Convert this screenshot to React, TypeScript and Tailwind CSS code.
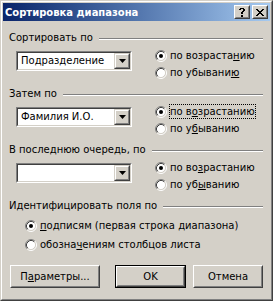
import React from "react";

function U({ children }: { children: React.ReactNode }) {
  return <span className="underline decoration-1 underline-offset-[1px]">{children}</span>;
}

function Radio({ checked }: { checked?: boolean }) {
  return (
    <svg width="12" height="12" viewBox="0 0 12 12" className="shrink-0 block">
      <circle cx="6" cy="6" r="4.5" fill="#ffffff" />
      <path d="M2.11 9.89 A5.5 5.5 0 0 1 9.89 2.11" fill="none" stroke="#808080" strokeWidth="1" />
      <path d="M9.89 2.11 A5.5 5.5 0 0 1 2.11 9.89" fill="none" stroke="#ffffff" strokeWidth="1" />
      <path d="M2.82 9.18 A4.5 4.5 0 0 1 9.18 2.82" fill="none" stroke="#404040" strokeWidth="1" />
      <path d="M9.18 2.82 A4.5 4.5 0 0 1 2.82 9.18" fill="none" stroke="#d4d0c8" strokeWidth="1" />
      {checked && <circle cx="6" cy="6" r="2" fill="#000000" />}
    </svg>
  );
}

function RadioRow({
  checked,
  children,
  focus,
  h = "h-[17px]",
}: {
  checked?: boolean;
  children: React.ReactNode;
  focus?: boolean;
  h?: string;
}) {
  return (
    <div className={`${h} flex items-center gap-[2px]`}>
      <Radio checked={checked} />
      <span
        className={
          focus
            ? "border border-dotted border-black leading-[13px] whitespace-nowrap"
            : "border border-transparent leading-[13px] whitespace-nowrap"
        }
      >
        {children}
      </span>
    </div>
  );
}

function DropBtn() {
  return (
    <div className="w-[16px] h-full bg-[#d4d0c8] border border-t-[#d4d0c8] border-l-[#d4d0c8] border-b-[#404040] border-r-[#404040]">
      <div className="w-full h-full border border-t-white border-l-white border-b-[#808080] border-r-[#808080] flex items-center justify-center">
        <svg width="7" height="4" viewBox="0 0 7 4" className="block">
          <path d="M0 0 H7 L3.5 4 Z" fill="#000" />
        </svg>
      </div>
    </div>
  );
}

function Combo({ text }: { text: string }) {
  return (
    <div className="w-[116px] h-[20px] border border-t-[#808080] border-l-[#808080] border-b-white border-r-white">
      <div className="h-full bg-white border border-t-[#404040] border-l-[#404040] border-b-[#d4d0c8] border-r-[#d4d0c8] flex">
        <div className="flex-1 pl-[3px] leading-[16px] whitespace-nowrap overflow-hidden">{text}</div>
        <DropBtn />
      </div>
    </div>
  );
}

function GroupLabel({ children }: { children: React.ReactNode }) {
  return (
    <div className="h-[13px] flex items-center gap-[6px]">
      <span className="leading-[13px] whitespace-nowrap">{children}</span>
      <div className="flex-1 h-[2px] mt-[2px] border-t border-t-[#808080] border-b border-b-white" />
    </div>
  );
}

function SortSection({
  label,
  combo,
  asc,
  desc,
  focus,
}: {
  label: React.ReactNode;
  combo: string;
  asc: React.ReactNode;
  desc: React.ReactNode;
  focus?: boolean;
}) {
  return (
    <div className="h-[56px] flex flex-col">
      <GroupLabel>{label}</GroupLabel>
      <div className="mt-[3px] flex items-start">
        <div className="ml-[7px] mt-[4px]">
          <Combo text={combo} />
        </div>
        <div className="ml-[23px] flex flex-col">
          <RadioRow checked focus={focus}>
            {asc}
          </RadioRow>
          <RadioRow>{desc}</RadioRow>
        </div>
      </div>
    </div>
  );
}

function PushButton({
  w,
  children,
  def,
}: {
  w: string;
  children: React.ReactNode;
  def?: boolean;
}) {
  const inner = (
    <div className="h-full w-full bg-[#d4d0c8] border border-t-white border-l-white border-b-[#404040] border-r-[#404040]">
      <div className="h-full w-full border border-t-[#d4d0c8] border-l-[#d4d0c8] border-b-[#808080] border-r-[#808080] flex items-center justify-center leading-[13px]">
        {children}
      </div>
    </div>
  );
  if (def) {
    return <div className={`${w} h-[23px] border border-black`}>{inner}</div>;
  }
  return <div className={`${w} h-[23px]`}>{inner}</div>;
}

function CaptionBtn({ children }: { children: React.ReactNode }) {
  return (
    <div className="w-[16px] h-[14px] bg-[#d4d0c8] border border-t-white border-l-white border-b-[#404040] border-r-[#404040]">
      <div className="w-full h-full border border-t-[#d4d0c8] border-l-[#d4d0c8] border-b-[#808080] border-r-[#808080] flex items-center justify-center">
        {children}
      </div>
    </div>
  );
}

function CloseGlyph() {
  const px: [number, number][] = [
    [0, 0], [1, 0], [6, 0], [7, 0],
    [1, 1], [2, 1], [5, 1], [6, 1],
    [2, 2], [3, 2], [4, 2], [5, 2],
    [3, 3], [4, 3],
    [2, 4], [3, 4], [4, 4], [5, 4],
    [1, 5], [2, 5], [5, 5], [6, 5],
    [0, 6], [1, 6], [6, 6], [7, 6],
  ];
  return (
    <svg width="8" height="7" viewBox="0 0 8 7" className="block" shapeRendering="crispEdges">
      {px.map(([x, y], i) => (
        <rect key={i} x={x} y={y} width="1" height="1" fill="#000" />
      ))}
    </svg>
  );
}

function HelpGlyph() {
  const px: [number, number][] = [
    [1, 0], [2, 0], [3, 0], [4, 0],
    [0, 1], [1, 1], [4, 1], [5, 1],
    [4, 2], [5, 2],
    [3, 3], [4, 3],
    [2, 4], [3, 4],
    [2, 5], [3, 5],
    [2, 7], [3, 7],
    [2, 8], [3, 8],
  ];
  return (
    <svg width="6" height="9" viewBox="0 0 6 9" className="block" shapeRendering="crispEdges">
      {px.map(([x, y], i) => (
        <rect key={i} x={x} y={y} width="1" height="1" fill="#000" />
      ))}
    </svg>
  );
}

export default function App() {
  return (
    <div className="w-[273px] h-[301px] bg-[#d4d0c8] border border-t-[#d4d0c8] border-l-[#d4d0c8] border-b-[#404040] border-r-[#404040] font-['DejaVu_Sans',Verdana,sans-serif] text-[10px] text-black">
      <div className="h-full border border-t-white border-l-white border-b-[#808080] border-r-[#808080] p-px flex flex-col">
        <div className="h-[18px] bg-gradient-to-r from-[#0a246a] to-[#a6caf0] flex items-center pl-[2px] pr-[2px]">
          <span className="text-white font-bold leading-[13px] whitespace-nowrap flex-1">
            Сортировка диапазона
          </span>
          <div className="flex gap-[2px]">
            <CaptionBtn>
              <HelpGlyph />
            </CaptionBtn>
            <CaptionBtn>
              <CloseGlyph />
            </CaptionBtn>
          </div>
        </div>
        <div className="flex-1 flex flex-col pl-[6px] pr-[7px] pt-[10px]">
          <SortSection
            label="Сортировать по"
            combo="Подразделение"
            asc={<>по возраста<U>н</U>ию</>}
            desc={<>по убывани<U>ю</U></>}
          />
          <SortSection
            label="Затем по"
            combo="Фамилия И.О."
            asc={<>по в<U>о</U>зрастанию</>}
            desc={<>по у<U>б</U>ыванию</>}
            focus
          />
          <SortSection
            label="В последнюю очередь, по"
            combo=""
            asc={<>по во<U>з</U>растанию</>}
            desc={<>по уб<U>ы</U>ванию</>}
          />
          <div className="flex flex-col">
            <GroupLabel>Идентифицировать поля по</GroupLabel>
            <div className="ml-[16px] mt-[4px] flex flex-col">
              <RadioRow checked h="h-[19px]">
                <U>п</U>одписям (первая строка диапазона)
              </RadioRow>
              <RadioRow h="h-[19px]">
                обозна<U>ч</U>ениям столбцов листа
              </RadioRow>
            </div>
          </div>
          <div className="mt-[11px] flex items-start">
            <div className="ml-[1px]">
              <PushButton w="w-[90px]">
                <span>
                  П<U>а</U>раметры...
                </span>
              </PushButton>
            </div>
            <div className="ml-[15px]">
              <PushButton w="w-[71px]" def>
                OK
              </PushButton>
            </div>
            <div className="ml-[7px]">
              <PushButton w="w-[70px]">Отмена</PushButton>
            </div>
          </div>
        </div>
      </div>
    </div>
  );
}
